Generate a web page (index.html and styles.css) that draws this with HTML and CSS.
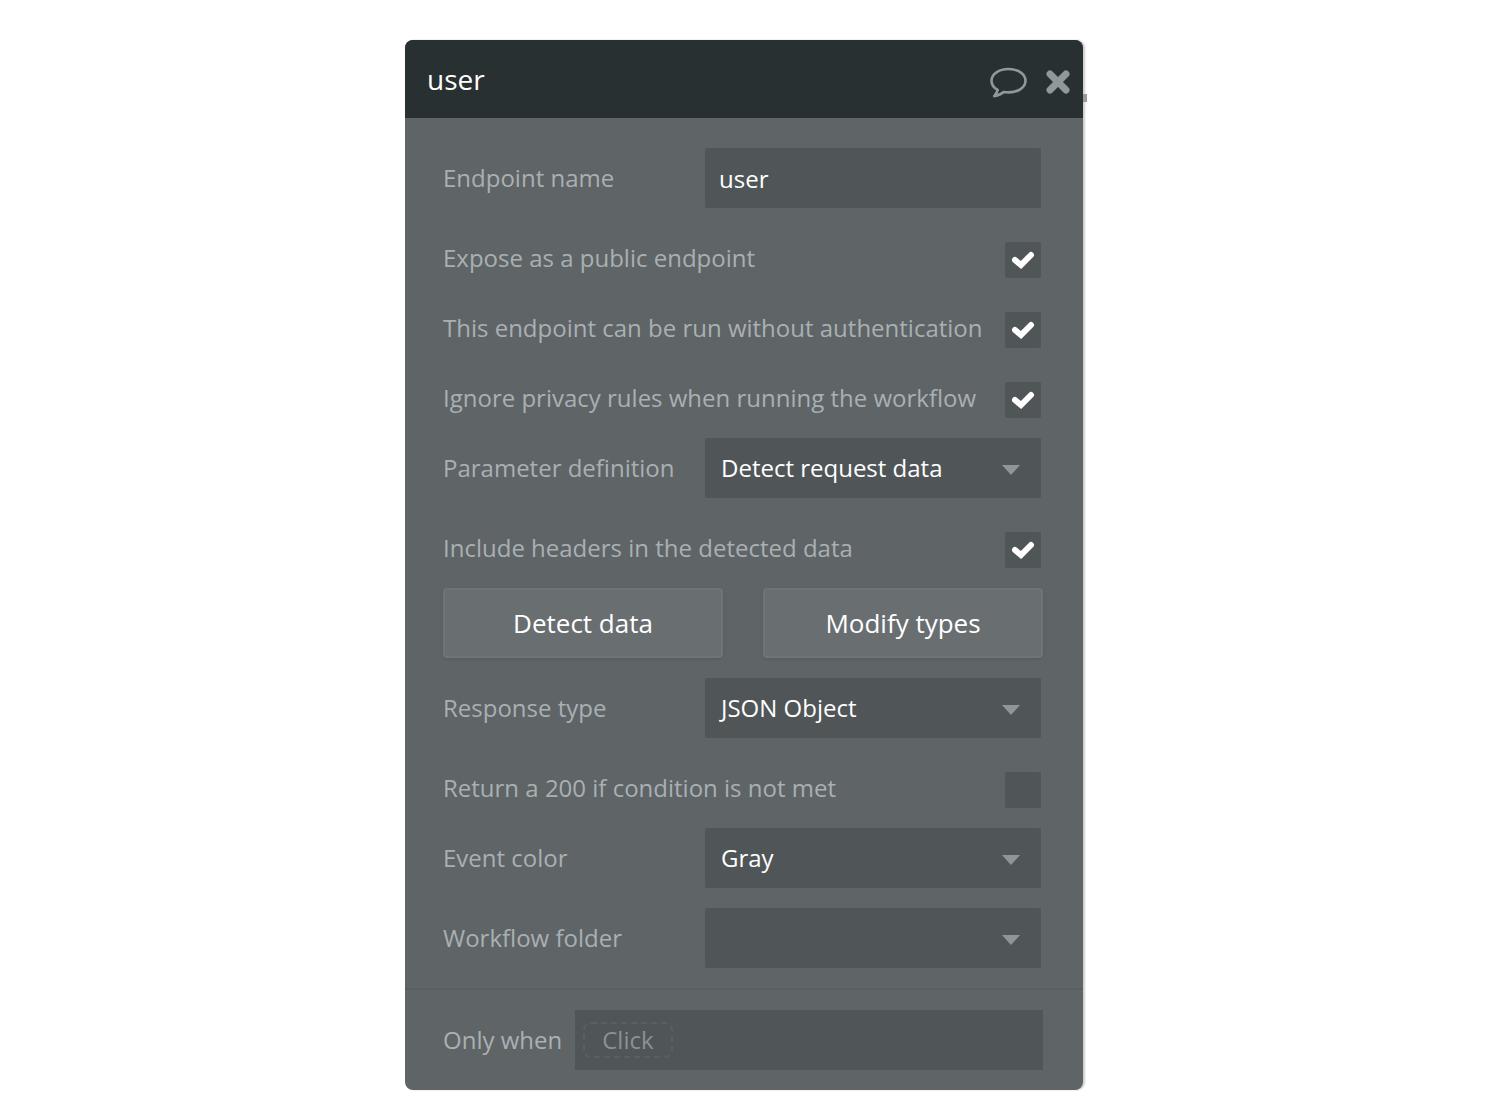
FILE: index.html
```html
<!DOCTYPE html>
<html lang="en">
<head>
    <meta charset="utf-8">
    <title>user</title>
    <link rel="stylesheet" href="styles.css">
</head>
<body>
    <form class="panel">
        <header class="panel-header">
            <h1>user</h1>
            <button type="button" class="icon-button" aria-label="Comment">
                <svg width="38" height="34" viewBox="0 0 38 34" fill="none" stroke="currentColor" stroke-width="2.6" stroke-linejoin="round">
                    <path d="M19.500 4C10 4 2.500 9 2.500 15.700c0 3.800 2.300 7 6.200 9.200-.6 2.600-1.700 4.400-3.500 6.200 4.200-.7 7.200-2 9.500-4.100 1.500.3 3 .4 4.800.4 9.500 0 17-5 17-11.700S29 4 19.500 4z"/>
                </svg>
            </button>
            <button type="button" class="icon-button" aria-label="Close">
                <svg width="26" height="26" viewBox="0 0 26 26" fill="none" stroke="currentColor" stroke-width="7" stroke-linecap="round">
                    <path d="M5 5l16 16M21 5L5 21"/>
                </svg>
            </button>
        </header>

        <div class="fields">
            <div class="row">
                <label for="endpointName">Endpoint name</label>
                <input type="text" id="endpointName" class="control" value="user">
            </div>
            <div class="check-row">
                <label for="public">Expose as a public endpoint</label>
                <input type="checkbox" id="public" checked>
            </div>
            <div class="check-row">
                <label for="noAuth">This endpoint can be run without authentication</label>
                <input type="checkbox" id="noAuth" checked>
            </div>
            <div class="check-row">
                <label for="ignorePrivacy">Ignore privacy rules when running the workflow</label>
                <input type="checkbox" id="ignorePrivacy" checked>
            </div>
            <div class="row">
                <label for="parameters">Parameter definition</label>
                <select id="parameters" class="control">
                    <option>Detect request data</option>
                </select>
            </div>
            <div class="check-row">
                <label for="includeHeaders">Include headers in the detected data</label>
                <input type="checkbox" id="includeHeaders" checked>
            </div>
            <div class="buttons">
                <button type="button" class="button">Detect data</button>
                <button type="button" class="button">Modify types</button>
            </div>
            <div class="row">
                <label for="responseType">Response type</label>
                <select id="responseType" class="control">
                    <option>JSON Object</option>
                </select>
            </div>
            <div class="check-row">
                <label for="return200">Return a 200 if condition is not met</label>
                <input type="checkbox" id="return200">
            </div>
            <div class="row">
                <label for="eventColor">Event color</label>
                <select id="eventColor" class="control">
                    <option>Gray</option>
                </select>
            </div>
            <div class="row">
                <label for="folder">Workflow folder</label>
                <select id="folder" class="control">
                    <option></option>
                </select>
            </div>
        </div>

        <div class="condition">
            <span id="onlyWhen">Only when</span>
            <div class="expression">
                <button type="button" class="placeholder" aria-describedby="onlyWhen">Click</button>
            </div>
        </div>
    </form>
</body>
</html>
```
FILE: styles.css
```css
* {
    box-sizing: border-box;
}
body {
    margin: 0;
    padding: 40px 0 24px 2px;
    background: #fff;
    font-family: "Open Sans", sans-serif;
    font-size: 24px;
    color: #a9b0b3;
}
input, select, button {
    margin: 0;
    border: none;
    font: inherit;
}
.panel {
    max-width: 678px;
    margin: 0 auto;
    background: #5f6467;
    border-radius: 8px;
    box-shadow: 2px 0 2px rgba(0, 0, 0, 0.2);
}
.panel-header {
    position: relative;
    display: flex;
    align-items: center;
    gap: 18px;
    height: 78px;
    padding: 0 12px 0 22px;
    background: #293032;
    border-radius: 8px 8px 0 0;
}
/* end of the connector line behind the panel */
.panel-header::after {
    content: "";
    position: absolute;
    left: 100%;
    top: 54px;
    width: 4px;
    height: 8px;
    background: #999;
}
h1 {
    flex: 1;
    margin: 0;
    font-size: 28px;
    font-weight: 500;
    line-height: 36px;
    color: #fff;
}
.icon-button {
    display: flex;
    padding: 6px 0 0;
    background: none;
    color: #8f989b;
    cursor: pointer;
}
.fields {
    display: flex;
    flex-direction: column;
    gap: 20px;
    padding: 30px 40px 20px 38px;
}
.row {
    display: grid;
    grid-template-columns: 262px 1fr;
    line-height: 60px;
    padding-right: 2px;
}
.control {
    width: 100%;
    min-width: 0;
    height: 60px;
    padding: 2px 60px 0 14px;
    background-color: #505558;
    border-radius: 2px;
    color: #fff;
    font-weight: 500;
}
select.control {
    appearance: none;
    padding: 0 60px 0 10px;
    text-indent: 6px;
    background-image: url("data:image/svg+xml,%3Csvg xmlns='http://www.w3.org/2000/svg' width='18' height='10'%3E%3Cpath d='M0 0h18l-9 10z' fill='%238f9699'/%3E%3C/svg%3E");
    background-repeat: no-repeat;
    background-position: right 21px top 27px;
}
.check-row {
    display: flex;
    justify-content: space-between;
    height: 50px;
    padding: 14px 2px 0 0;
    line-height: 32px;
}
input[type="checkbox"] {
    appearance: none;
    width: 36px;
    height: 36px;
    background: #505558;
    border-radius: 2px;
}
input[type="checkbox"]:checked {
    background-image: url("data:image/svg+xml,%3Csvg xmlns='http://www.w3.org/2000/svg' width='36' height='36'%3E%3Cpath d='M10 18l6 5L26 13' fill='none' stroke='%23fff' stroke-width='6' stroke-linecap='round'/%3E%3C/svg%3E");
}
.buttons {
    display: grid;
    grid-template-columns: 1fr 1fr;
    gap: 40px;
}
.button {
    height: 70px;
    padding: 0;
    background: #696e71;
    border: 2px solid #6f7477;
    border-radius: 4px;
    box-shadow: 0 1px 3px rgba(0, 0, 0, 0.1);
    color: #fff;
    font-size: 26px;
    font-weight: 500;
    cursor: pointer;
}
.condition {
    display: flex;
    align-items: center;
    gap: 13px;
    padding: 20px 40px 20px 38px;
    border-top: 2px solid #5a5f62;
    line-height: 32px;
}
.expression {
    flex: 1;
    display: flex;
    align-items: center;
    height: 60px;
    padding: 0 8px;
    background: #505558;
}
.placeholder {
    height: 36px;
    padding: 0 17px;
    background: none;
    border: 2px dashed #5a5f62;
    border-radius: 8px;
    color: #8b9194;
    line-height: 30px;
}
```
